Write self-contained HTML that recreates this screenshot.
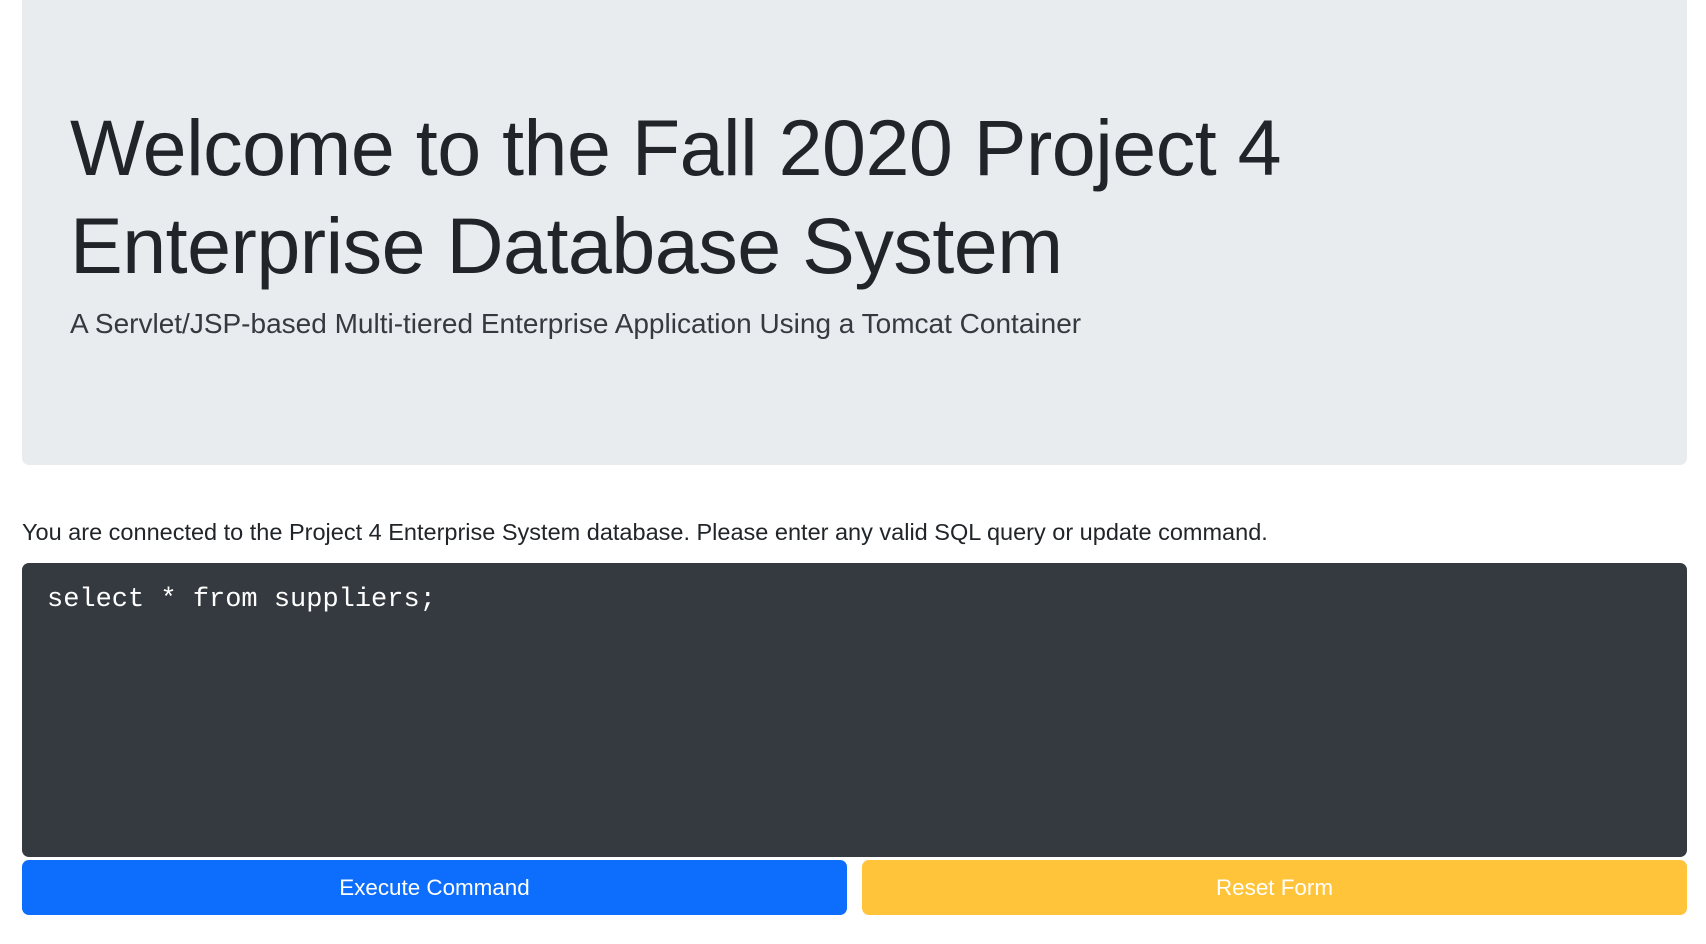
<!DOCTYPE html>
<html><head><meta charset="utf-8"><style>
html,body{margin:0;padding:0;background:#fff;width:1706px;height:944px;overflow:hidden;font-family:"Liberation Sans",sans-serif;color:#212529}
.j{position:absolute;left:22px;top:0;width:1665px;height:465px;background:#e9ecef;border-radius:0 0 7px 7px}
h1{position:absolute;left:70px;top:99px;margin:0;font-size:79px;line-height:98px;font-weight:normal;color:#212529;letter-spacing:-0.5px}
.lead{position:absolute;left:70px;top:303px;font-size:28px;line-height:42px;color:#343a40}
.t{position:absolute;left:22px;top:516px;font-size:23.5px;line-height:33.6px}
.ta{position:absolute;left:22px;top:563px;width:1665px;height:294px;background:#343a40;border-radius:7px;box-sizing:border-box;padding:17px 25px;color:#fff;font-family:"Liberation Mono",monospace;font-size:27px;line-height:40px}
.b{position:absolute;top:860px;height:55px;border-radius:7px;color:#fff;font-size:22.4px;line-height:55px;text-align:center}
</style></head><body>
<div class="j"></div>
<h1>Welcome to the Fall 2020 Project 4<br>Enterprise Database System</h1>
<div class="lead">A Servlet/JSP-based Multi-tiered Enterprise Application Using a Tomcat Container</div>
<div class="t">You are connected to the Project 4 Enterprise System database. Please enter any valid SQL query or update command.</div>
<div class="ta">select * from suppliers;</div>
<div class="b" style="left:22px;width:825px;background:#0d6efd">Execute Command</div>
<div class="b" style="left:862px;width:825px;background:#ffc439">Reset Form</div>
</body></html>
